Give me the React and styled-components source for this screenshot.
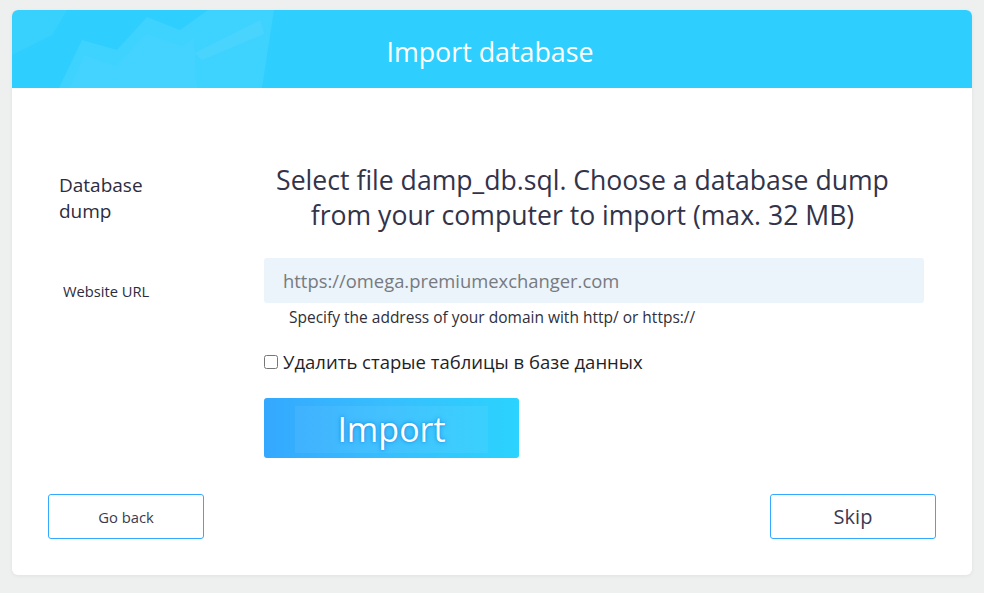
import React from "react";
import styled, { createGlobalStyle } from "styled-components";

const GlobalStyle = createGlobalStyle`
  html, body {
    margin: 0;
    padding: 0;
    background: #eeefef;
    font-family: "Open Sans", "Noto Sans", Arial, sans-serif;
  }
  * { box-sizing: border-box; }
`;

export default function App() {
  return (
    <>
      <GlobalStyle />
      <Page>
        <Card>
          <Header>
            <Decor viewBox="0 0 270 78" preserveAspectRatio="none">
              <path d="M0 0 L55 0 L40 25 L0 45 Z" fill="rgba(255,255,255,0.05)" />
              <path d="M47 78 L70 30 L105 40 L135 7 L168 20 L196 0 L262 0 L250 78 Z" fill="rgba(255,255,255,0.08)" />
              <path d="M58 78 L72 45 L104 56 L134 24 L170 36 L182 28 L185 78 Z" fill="rgba(255,255,255,0.03)" />
              <path d="M183 43 L248 10 L252 24 L190 50 Z" fill="rgba(255,255,255,0.06)" />
            </Decor>
            <Title>Import database</Title>
          </Header>
          <Body>
            <Form>
              <Label $size={19} $offset={9} $indent={11}>
                Database
                <br />
                dump
              </Label>
              <Heading>
                Select file damp_db.sql. Choose a database dump from your computer to import (max. 32 MB)
              </Heading>

              <Label $size={14.7} $offset={25} $indent={15}>
                Website URL
              </Label>
              <Field>
                <Input defaultValue="https://omega.premiumexchanger.com" />
                <Hint>Specify the address of your domain with http/ or https://</Hint>
              </Field>

              <span />
              <Check>
                <input type="checkbox" />
                Удалить старые таблицы в базе данных
              </Check>

              <span />
              <ImportButton>
                <span>Import</span>
              </ImportButton>
            </Form>
            <Footer>
              <OutlineButton $size={14.8} $width={156}>Go back</OutlineButton>
              <OutlineButton $size={20} $width={166}>Skip</OutlineButton>
            </Footer>
          </Body>
        </Card>
      </Page>
    </>
  );
}

const Page = styled.div`
  padding: 10px 12px 18px;
  min-height: 593px;
`;

const Card = styled.div`
  width: 960px;
  background: #fff;
  border-radius: 6px;
  overflow: hidden;
  box-shadow: 0 1px 4px rgba(0, 0, 0, 0.06);
`;

const Header = styled.div`
  position: relative;
  height: 78px;
  background: #2ecffe;
  display: flex;
  align-items: center;
  justify-content: center;
`;

const Decor = styled.svg`
  position: absolute;
  left: 0;
  top: 0;
  width: 270px;
  height: 78px;
`;

const Title = styled.h1`
  position: relative;
  margin: 4px 0 0 -4px;
  font-size: 26.8px;
  font-weight: 400;
  color: #fff;
`;

const Body = styled.div`
  padding: 75px 36px 36px;
`;

const Form = styled.div`
  display: grid;
  grid-template-columns: 216px 660px;
  row-gap: 23px;
`;

const Label = styled.div`
  padding-top: ${(p) => p.$offset}px;
  padding-left: ${(p) => p.$indent}px;
  font-size: ${(p) => p.$size}px;
  line-height: ${(p) => (p.$size > 16 ? 26 : 20)}px;
  color: #2c2c3e;
`;

const Heading = styled.h2`
  margin: 0;
  padding: 0 35px 0 12px;
  font-size: 26.6px;
  font-weight: 400;
  line-height: 35px;
  text-align: center;
  color: #33334a;
`;

const Field = styled.div`
  display: flex;
  flex-direction: column;
  padding-top: 2px;
`;

const Input = styled.input`
  height: 45px;
  border: none;
  border-radius: 3px;
  background: #ebf3fb;
  padding: 0 19px;
  font-family: inherit;
  font-size: 18.4px;
  color: #777a80;
  outline: none;
`;

const Hint = styled.div`
  margin-top: 4px;
  padding-left: 25px;
  font-size: 15.5px;
  line-height: 20px;
  color: #2f2f3a;
`;

const Check = styled.label`
  display: flex;
  align-items: center;
  gap: 5px;
  font-size: 18.5px;
  line-height: 24px;
  color: #1f1f28;

  input {
    margin: 0;
    width: 14px;
    height: 14px;
  }
`;

const ImportButton = styled.button`
  width: 255px;
  height: 60px;
  margin-top: 1px;
  border: none;
  border-radius: 3px;
  background: linear-gradient(90deg, #34a8fe 0%, #38bdfe 45%, #2bd3fd 100%);
  display: flex;
  align-items: center;
  justify-content: center;
  padding: 0;
  cursor: pointer;

  span {
    display: flex;
    align-items: center;
    justify-content: center;
    width: 193px;
    height: 47px;
    margin: 2px 0 0 0;
    background: rgba(255, 255, 255, 0.06);
    font-family: "Open Sans", "Noto Sans", Arial, sans-serif;
    font-size: 34px;
    color: #fff;
    text-shadow: 0 0 5px #1b95e6, 0 0 2px #1b95e6;
  }
`;

const Footer = styled.div`
  display: flex;
  justify-content: space-between;
  margin-top: 36px;
`;

const OutlineButton = styled.button`
  width: ${(p) => p.$width}px;
  height: 45px;
  border: 1px solid #33aaff;
  border-radius: 3px;
  background: #fff;
  font-family: "Open Sans", "Noto Sans", Arial, sans-serif;
  font-size: ${(p) => p.$size}px;
  color: #3b3a52;
  cursor: pointer;
`;
